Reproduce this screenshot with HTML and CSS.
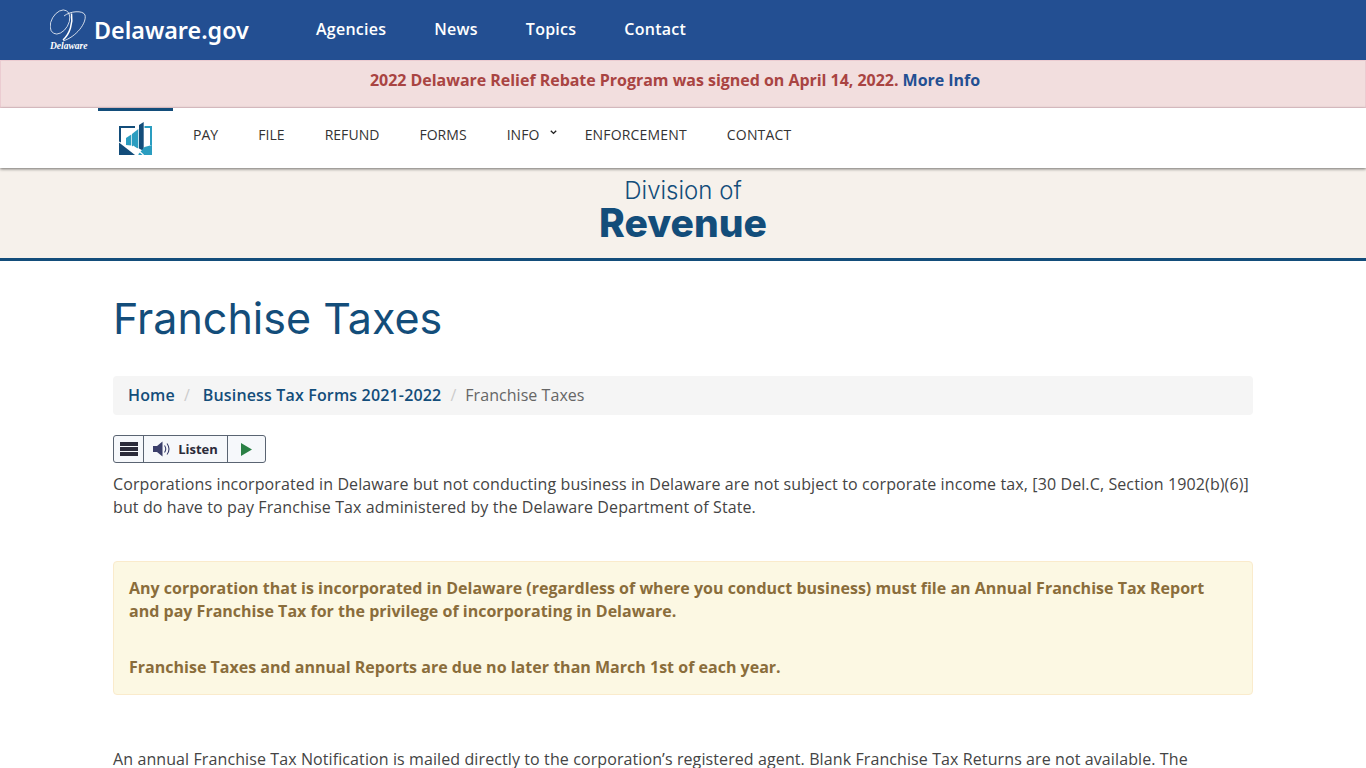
FILE: index.html
```html
<!DOCTYPE html>
<html lang="en">
<head>
<meta charset="utf-8">
<title>Franchise Taxes - Division of Revenue</title>
<link rel="stylesheet" href="styles.css">
</head>
<body>
<header class="top">
  <a class="brand" href="#">
    <span class="seal">
      <svg class="seal-mark" viewBox="0 0 38 38" width="38" height="38" aria-hidden="true">
        <g fill="none" stroke="#fff">
          <ellipse cx="10" cy="13" rx="8.500" ry="13" transform="rotate(30 10 13)" stroke-width=".7"/>
          <path d="M21.500 4.500C23 14 20 25 13 31" stroke-width="1.500"/>
          <path d="M14 7C20 2 33 1 35 6C37 14 26 28 13 32" stroke-width=".8"/>
        </g>
      </svg>
      <span class="seal-name">Delaware</span>
    </span>
    <span class="brand-name">Delaware.gov</span>
  </a>
  <nav class="top-nav">
    <a href="#">Agencies</a>
    <a href="#">News</a>
    <a href="#">Topics</a>
    <a href="#">Contact</a>
  </nav>
</header>
<div class="notice">2022 Delaware Relief Rebate Program was signed on April 14, 2022. <a href="#">More Info</a></div>
<nav class="sub-nav">
  <div class="sub-inner">
    <a class="home-tab" href="#">
      <svg viewBox="0 0 33 33" width="33" height="33" aria-hidden="true">
        <path d="M0 4H16V6H2V20.500L0 19.500Z" fill="#134d7a"/>
        <path d="M25.500 4H33V23H31V6H25.500Z" fill="#2a9dc0"/>
        <path d="M0 20.500L16 33H0Z" fill="#134d7a"/>
        <path d="M7 16L12.300 12.500V23.500L7 23Z" fill="#2a9dc0"/>
        <path d="M13 12L19.300 7V26.500L13 24Z" fill="#2a9dc0"/>
        <path d="M20 3L24.700 0V29L20 26.500Z" fill="#134d7a"/>
        <path d="M25.500 25L33 23V33H19.500V32Z" fill="#2a9dc0"/>
        <path d="M14 24L24.500 33" stroke="#fff" stroke-width="1.200"/>
      </svg>
    </a>
    <ul class="sub-links">
      <li><a href="#">PAY</a></li>
      <li><a href="#">FILE</a></li>
      <li><a href="#">REFUND</a></li>
      <li><a href="#">FORMS</a></li>
      <li class="has-caret"><a href="#">INFO</a><svg class="caret" viewBox="0 0 7 5" width="7" height="5" aria-hidden="true"><path d="M.8 .8L3.500 3.400L6.200 .8" fill="none" stroke="#222" stroke-width="1.400"/></svg></li>
      <li><a href="#">ENFORCEMENT</a></li>
      <li><a href="#">CONTACT</a></li>
    </ul>
  </div>
</nav>
<div class="banner">
  <div class="banner-small">Division of</div>
  <div class="banner-large">Revenue</div>
</div>
<main class="container">
  <h1>Franchise Taxes</h1>
  <ol class="crumbs">
    <li><a href="#">Home</a></li>
    <li><a href="#">Business Tax Forms 2021-2022</a></li>
    <li class="current">Franchise Taxes</li>
  </ol>
  <div class="listen">
    <span class="ls-menu"><svg viewBox="0 0 18 14" width="18" height="14" aria-hidden="true"><path d="M0 0H18V4H0ZM0 5H18V9H0ZM0 10H18V14H0Z" fill="#2b2b3a"/></svg></span>
    <span class="ls-label">
      <svg viewBox="0 0 20 16" width="20" height="16" aria-hidden="true"><path d="M0 5H4L9.500 .5V15.500L4 11H0Z" fill="#3b3f6b"/><path d="M11.500 4.500Q14 8 11.500 11.500M14 2.500Q18 8 14 13.500" fill="none" stroke="#3b3f6b" stroke-width="1.100"/></svg>
      Listen
    </span>
    <span class="ls-play"><svg viewBox="0 0 11 13" width="11" height="13" aria-hidden="true"><path d="M0 0L11 6.500L0 13Z" fill="#2a8045"/></svg></span>
  </div>
  <p class="intro">Corporations incorporated in Delaware but not conducting business in Delaware are not subject to corporate income tax, [30 Del.C, Section 1902(b)(6)] but do have to pay Franchise Tax administered by the Delaware Department of State.</p>
  <div class="warn">
    <p>Any corporation that is incorporated in Delaware (regardless of where you conduct business) must file an Annual Franchise Tax Report and pay Franchise Tax for the privilege of incorporating in Delaware.</p>
    <p>Franchise Taxes and annual Reports are due no later than March 1st of each year.</p>
  </div>
  <p class="body-text">An annual Franchise Tax Notification is mailed directly to the corporation’s registered agent. Blank Franchise Tax Returns are not available. The</p>
</main>
</body>
</html>
```
FILE: styles.css
```css
* { box-sizing: border-box; }
html, body { margin: 0; padding: 0; }
body {
  height: 768px;
  overflow: hidden;
  background: #fff;
  color: #444;
  font: 16px/23px "Open Sans", sans-serif;
}
a { text-decoration: none; }

.top {
  height: 60px;
  background: #234f92;
  display: flex;
  align-items: center;
  padding-left: 50px;
}
.brand { display: flex; align-items: center; color: #fff; width: 266px; }
.seal { position: relative; width: 38px; height: 42px; margin-right: 6px; }
.seal-mark { display: block; }
.seal-name {
  position: absolute;
  left: 0;
  top: 32px;
  font: italic 700 9.500px/10px "Liberation Serif", serif;
  color: #fff;
}
.brand-name { font: 600 23.300px/30px "Noto Sans", sans-serif; color: #fff; }
.top-nav { display: flex; gap: 48px; margin-top: -2px; }
.top-nav a { color: #fff; font-weight: 600; font-size: 16px; letter-spacing: .25px; }

.notice {
  height: 48px;
  background: #f2dede;
  border: 1px solid #ebccd1;
  color: #a94442;
  font-weight: 700;
  text-align: center;
  line-height: 38px;
  padding-right: 16px;
  letter-spacing: -.03px;
}
.notice a { color: #234f92; }

.sub-nav {
  height: 60px;
  background: #fff;
  box-shadow: 0 1px 3px rgba(0,0,0,.55);
  position: relative;
}
.sub-inner { margin-left: 98px; display: flex; height: 60px; }
.home-tab {
  width: 75px;
  border-top: 3px solid #134d7a;
  display: flex;
  justify-content: center;
  padding-top: 11px;
  margin-right: 20px;
}
.sub-links { list-style: none; margin: 0; padding: 0; display: flex; gap: 40px; }
.sub-links li { line-height: 52px; position: relative; }
.sub-links a { color: #333; font-size: 14px; letter-spacing: .04px; }
.sub-links li:nth-last-child(-n+2) a { letter-spacing: .17px; }
.has-caret { width: 38px; }
.caret { position: absolute; left: 43px; top: 22px; }

.banner {
  height: 93px;
  background: #f6f1eb;
  border-bottom: 3px solid #134d7a;
  text-align: center;
  color: #134d7a;
  font-family: Inter, sans-serif;
  padding-top: 9px;
}
.banner-small { font-size: 24px; line-height: 28px; font-weight: 300; }
.banner-large { font-size: 39px; line-height: 36px; font-weight: 800; }

.container { margin: 0 113px; }
h1 {
  margin: 0;
  padding-top: 30px;
  color: #134d7a;
  font: 400 43px/54px Inter, sans-serif;
}
.crumbs {
  list-style: none;
  margin: 31px 0 20px;
  padding: 8px 15px;
  height: 39px;
  background: #f5f5f5;
  border-radius: 4px;
  display: flex;
}
.crumbs a { color: #134d7a; font-weight: 600; letter-spacing: .16px; }
.crumbs li + li::before { content: "/"; color: #ccc; padding: 0 9px; }
.crumbs li:nth-child(2)::before { padding-right: 13px; }
.crumbs .current { color: #666; letter-spacing: .05px; }

.listen {
  display: inline-flex;
  height: 28px;
  border: 1px solid #5a6472;
  border-radius: 3px;
  background: #f6f8fb;
  vertical-align: top;
  color: #2b2b3a;
}
.listen > span { display: flex; align-items: center; justify-content: center; }
.ls-menu { width: 30px; border-right: 1px solid #5a6472; }
.ls-label { width: 84px; gap: 5px; font-size: 13px; font-weight: 700; border-right: 1px solid #5a6472; }
.ls-play { width: 37px; }

.intro { margin: 10px 0 0; letter-spacing: .11px; }
.warn {
  margin-top: 42px;
  height: 134px;
  padding: 15px;
  background: #fcf8e3;
  border: 1px solid #faebcc;
  border-radius: 4px;
  color: #8a6d3b;
  font-weight: 700;
  letter-spacing: .01px;
}
.warn p { margin: 0 0 10px; }
.warn p + p { margin-top: 33px; }
.body-text { margin: 53px 0 0; letter-spacing: .1px; }
```
